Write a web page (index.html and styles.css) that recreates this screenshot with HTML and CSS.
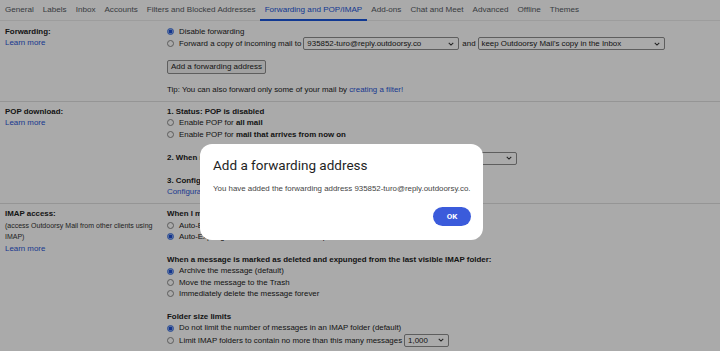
FILE: index.html
```html
<!DOCTYPE html>
<html lang="en">
<head>
<meta charset="utf-8">
<title>Settings - Forwarding and POP/IMAP</title>
<link rel="stylesheet" href="styles.css">
</head>
<body>
<nav class="tabs">
  <span class="tab">General</span>
  <span class="tab">Labels</span>
  <span class="tab">Inbox</span>
  <span class="tab">Accounts</span>
  <span class="tab">Filters and Blocked Addresses</span>
  <span class="tab active">Forwarding and POP/IMAP</span>
  <span class="tab">Add-ons</span>
  <span class="tab">Chat and Meet</span>
  <span class="tab">Advanced</span>
  <span class="tab">Offline</span>
  <span class="tab">Themes</span>
</nav>

<section class="section sec-fwd">
  <div class="label">
    <b>Forwarding:</b><br>
    <a class="link">Learn more</a>
  </div>
  <div class="body">
    <label class="row"><input type="radio" class="radio" name="fwd" checked>Disable forwarding</label>
    <div class="row row-sel">
      <input type="radio" class="radio" name="fwd">Forward a copy of incoming mail to
      <span class="select sel-addr"><span>935852-turo@reply.outdoorsy.co</span><svg class="chev" viewBox="0 0 8 5" width="6" height="4"><path d="M1 1 L4 4 L7 1" fill="none" stroke="#333" stroke-width="1.4"/></svg></span>
      <span class="and">and</span>
      <span class="select sel-keep"><span>keep Outdoorsy Mail's copy in the Inbox</span><svg class="chev" viewBox="0 0 8 5" width="6" height="4"><path d="M1 1 L4 4 L7 1" fill="none" stroke="#333" stroke-width="1.4"/></svg></span>
    </div>
    <button class="btn">Add a forwarding address</button>
    <p class="tip">Tip: You can also forward only some of your mail by <a class="link">creating a filter!</a></p>
  </div>
</section>

<section class="section sec-pop">
  <div class="label">
    <b>POP download:</b><br>
    <a class="link">Learn more</a>
  </div>
  <div class="body">
    <div class="row"><b>1. Status: POP is disabled</b></div>
    <label class="row"><input type="radio" class="radio" name="pop">Enable POP for&nbsp;<b>all mail</b></label>
    <label class="row"><input type="radio" class="radio" name="pop">Enable POP for&nbsp;<b>mail that arrives from now on</b></label>
    <div class="row row-sel gap"><b>2. When messages are accessed with POP</b>
      <span class="select sel-pop"><span>keep Outdoorsy Mail's copy in the Inbox</span><svg class="chev" viewBox="0 0 8 5" width="6" height="4"><path d="M1 1 L4 4 L7 1" fill="none" stroke="#333" stroke-width="1.4"/></svg></span>
    </div>
    <div class="row gap-s"><b>3. Configure your email client</b>&nbsp;(e.g. Outlook, Eudora, Netscape Mail)</div>
    <div class="row"><a class="link">Configuration instructions</a></div>
  </div>
</section>

<section class="section sec-imap">
  <div class="label">
    <b>IMAP access:</b><br>
    <span class="note">(access Outdoorsy Mail from other clients using IMAP)</span><br>
    <a class="link">Learn more</a>
  </div>
  <div class="body">
    <div class="row"><b>When I mark a message in IMAP as deleted:</b></div>
    <label class="row"><input type="radio" class="radio" name="exp">Auto-Expunge on - Immediately update the server. (default)</label>
    <label class="row"><input type="radio" class="radio" name="exp" checked>Auto-Expunge off - Wait for the client to update the server.</label>
    <div class="row gap"><b>When a message is marked as deleted and expunged from the last visible IMAP folder:</b></div>
    <label class="row"><input type="radio" class="radio" name="del" checked>Archive the message (default)</label>
    <label class="row"><input type="radio" class="radio" name="del">Move the message to the Trash</label>
    <label class="row"><input type="radio" class="radio" name="del">Immediately delete the message forever</label>
    <div class="row gap"><b>Folder size limits</b></div>
    <label class="row"><input type="radio" class="radio" name="lim" checked>Do not limit the number of messages in an IMAP folder (default)</label>
    <div class="row row-sel"><input type="radio" class="radio" name="lim">Limit IMAP folders to contain no more than this many messages
      <span class="select sel-num"><span>1,000</span><svg class="chev" viewBox="0 0 8 5" width="6" height="4"><path d="M1 1 L4 4 L7 1" fill="none" stroke="#333" stroke-width="1.4"/></svg></span>
    </div>
  </div>
</section>

<div class="scrim"></div>
<div class="dialog" role="dialog">
  <h2 class="dlg-title">Add a forwarding address</h2>
  <p class="dlg-text">You have added the forwarding address 935852-turo@reply.outdoorsy.co.</p>
  <div class="dlg-actions"><button class="ok">OK</button></div>
</div>
</body>
</html>
```
FILE: styles.css
```css
html, body {
  margin: 0;
  padding: 0;
}
body {
  width: 720px;
  height: 351px;
  overflow: hidden;
  background: #fff;
  color: #222;
  font-family: "Liberation Sans", Arial, sans-serif;
  font-size: 7.9px;
  position: relative;
  padding-top: 1px;
  box-sizing: border-box;
}

.tabs {
  display: flex;
  height: 19.5px;
  padding-left: 0.5px;
  border-bottom: 1px solid #ececec;
  box-sizing: border-box;
  font-size: 8.1px;
}
.tab {
  padding: 0 4.5px;
  line-height: 17.5px;
  height: 17.5px;
  color: #555a5f;
  border-bottom: 2px solid transparent;
  white-space: nowrap;
}
.tab.active {
  color: #1a56db;
  border-bottom-color: #1a56db;
}

.section {
  display: grid;
  grid-template-columns: 162px 1fr;
  padding: 5px 0 5.5px 5px;
  border-bottom: 1px solid #e0e0e0;
  line-height: 11.5px;
}
.sec-pop { padding: 4px 0 5.5px 5px; }
.sec-imap { padding: 4px 0 6px 5px; border-bottom: none; }
.sec-imap .row { height: 11.4px; }

.label b { font-weight: bold; }
.note {
  display: inline-block;
  width: 152px;
  font-size: 7px;
  color: #333;
}
.link { color: #2a56d8; text-decoration: none; }

.body { display: flex; flex-direction: column; align-items: flex-start; }
.row {
  display: flex;
  align-items: center;
  height: 11.5px;
  white-space: nowrap;
}
.row-sel { height: 13px; }
.sec-imap .row-sel { height: 13px; }
.gap { margin-top: 11.5px; }
.gap-s { margin-top: 10.25px; }

.radio {
  appearance: none;
  -webkit-appearance: none;
  box-sizing: border-box;
  width: 7px;
  height: 7px;
  margin: 0 5px 0 0;
  border: 1px solid #8a8a8a;
  border-radius: 50%;
  background: #fff;
  flex: none;
}
.radio:checked {
  border-color: #3a6fe0;
  background: radial-gradient(circle, #1d4fd6 0 1.6px, #9dbaf5 2.1px);
}

.select {
  display: inline-flex;
  align-items: center;
  justify-content: space-between;
  box-sizing: border-box;
  height: 13px;
  border: 1px solid #8d8d8d;
  border-radius: 2px;
  background: #fff;
  padding: 0 4px 0 3px;
  color: #222;
}
.chev { flex: none; }
.sel-addr { width: 156px; margin-left: 2px; }
.and { margin: 0 2px 0 3px; }
.sel-keep { width: 187px; }
.sel-pop { width: 187px; margin-left: 4px; }
.sel-num { width: 45px; margin-left: 2px; }

.btn {
  margin-top: 9.5px;
  width: 99px;
  height: 14px;
  padding: 0;
  box-sizing: border-box;
  border: 1px solid #8d8d8d;
  border-radius: 2px;
  background: #f2f2f2;
  font-family: inherit;
  font-size: 8px;
  color: #222;
}
.tip { margin: 10px 0 0; }

.scrim {
  position: fixed;
  inset: 0;
  background: rgba(0, 0, 0, 0.333);
}

.dialog {
  position: absolute;
  left: 200px;
  top: 144px;
  width: 283px;
  height: 96px;
  box-sizing: border-box;
  padding: 12px 12px 0 13px;
  background: #fff;
  border-radius: 12px;
  display: flex;
  flex-direction: column;
}
.dlg-title {
  margin: 0;
  font-family: Roboto, "Liberation Sans", sans-serif;
  font-weight: normal;
  font-size: 13.5px;
  line-height: 18px;
  color: #1f1f1f;
}
.dlg-text {
  margin: 8.5px 0 0;
  font-family: "Liberation Sans", Arial, sans-serif;
  font-size: 7.9px;
  line-height: 11px;
  color: #444;
}
.dlg-actions {
  display: flex;
  justify-content: flex-end;
  margin-top: 13.5px;
}
.ok {
  width: 38px;
  height: 19px;
  border: none;
  border-radius: 10px;
  background: #3b5bdb;
  color: #fff;
  font-family: Roboto, "Liberation Sans", sans-serif;
  font-weight: bold;
  font-size: 8px;
  padding: 0;
}
```
